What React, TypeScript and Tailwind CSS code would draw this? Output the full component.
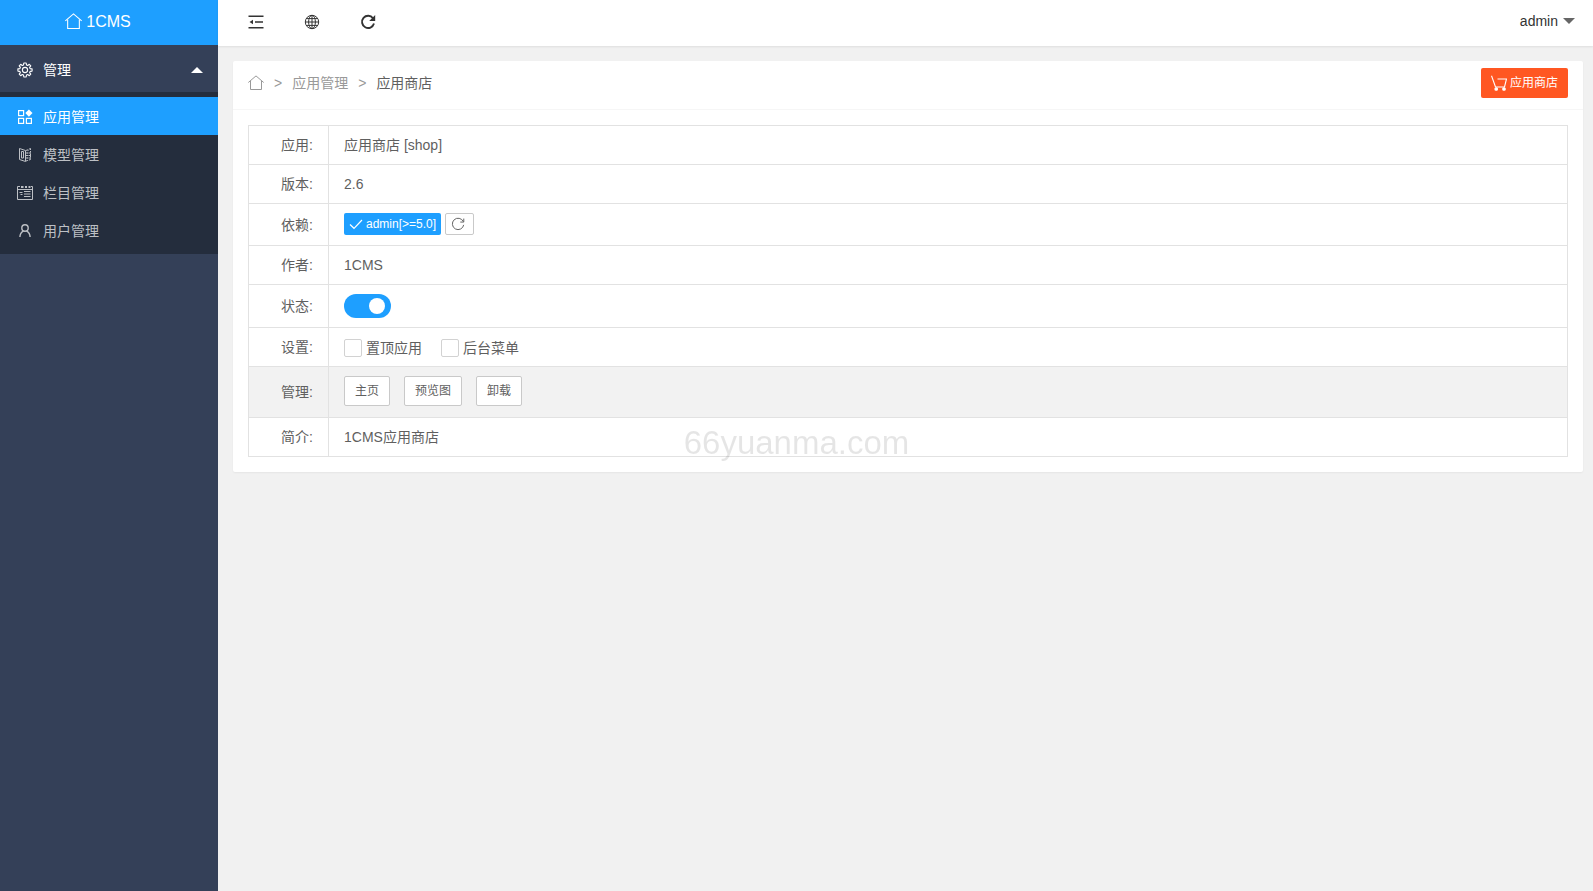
import { useState, type ReactNode } from "react";

type IconProps = { className?: string };

function HomeIcon({ className }: IconProps) {
  return (
    <svg viewBox="0 0 16 16" className={className} fill="none" stroke="currentColor" strokeWidth="1" aria-hidden="true">
      <path d="M0.300 7.500 8 .900l7.700 6.600" />
      <path d="M2.500 6v8.500h11V6" />
    </svg>
  );
}

function GearIcon({ className }: IconProps) {
  return (
    <svg viewBox="0 0 16 16" className={className} fill="none" stroke="currentColor" strokeWidth="1.1" strokeLinejoin="round" aria-hidden="true">
      <path d="M6.500 3 6.800 1h2.400l.3 2 1.200.5 1.600-1.200 1.500 1.500-1.200 1.600.5 1.200 2 .3v2.200l-2 .3-.5 1.200 1.200 1.600-1.500 1.500-1.600-1.200-1.200.5-.3 2H6.800l-.3-2-1.200-.5-1.600 1.200-1.500-1.500 1.200-1.600-.5-1.200-2-.3V6.900l2-.3.5-1.200-1.200-1.600 1.500-1.500 1.600 1.200z" />
      <circle cx="8" cy="8" r="2.600" />
    </svg>
  );
}

function AppsIcon({ className }: IconProps) {
  return (
    <svg viewBox="0 0 16 16" className={className} fill="none" stroke="currentColor" strokeWidth="1.2" aria-hidden="true">
      <rect x="1.600" y="1.600" width="5" height="5" />
      <rect x="1.600" y="9.400" width="5" height="5" />
      <rect x="9.400" y="9.400" width="5" height="5" />
      <path d="m11.900.5 3.600 3.600-3.600 3.600-3.600-3.600z" fill="currentColor" stroke="none" />
    </svg>
  );
}

function ModelIcon({ className }: IconProps) {
  return (
    <svg viewBox="0 0 16 16" className={className} fill="none" stroke="currentColor" strokeWidth="1" aria-hidden="true">
      <path d="M2.500 1.500 8.500 3.500v11L2.500 12.500z" />
      <path d="M4.500 4.500h2v6.500h-2z" />
      <path d="M9 3.500 13.500 1.500M9 6h5M9 8.500h5M9 11h5M9 14l4.500-1.500" strokeDasharray="2 1" />
      <path d="M13.500 1.500v11" strokeDasharray="1.500 1" />
      <path d="M11 3v10" strokeDasharray="1 1.500" />
    </svg>
  );
}

function ColumnIcon({ className }: IconProps) {
  return (
    <svg viewBox="0 0 16 16" className={className} fill="none" stroke="currentColor" strokeWidth="1" aria-hidden="true">
      <path d="M3 1.500H.500v13h15v-13H14M.5 4.500h15" />
      <path d="M4 2h2.500M8 2h2M11.500 2h2" strokeWidth="2" />
      <path d="M2.500 7.500h3M7 6.500h6.500M3.500 9.500h2M7 9h6.500M7 11.500h6.500" />
    </svg>
  );
}

function UserIcon({ className }: IconProps) {
  return (
    <svg viewBox="0 0 16 16" className={className} fill="none" stroke="currentColor" strokeWidth="1.400" aria-hidden="true">
      <circle cx="8" cy="5" r="3.200" />
      <path d="M2.900 14c.1-3 1.500-4.800 3.600-6.100M13.100 14c-.1-3-1.500-4.800-3.600-6.100" />
    </svg>
  );
}

function ShrinkIcon({ className }: IconProps) {
  return (
    <svg viewBox="0 0 16 16" className={className} fill="none" stroke="currentColor" strokeWidth="1.500" aria-hidden="true">
      <path d="M.5 2.200h15M7 8h8M.5 13.800h15" />
      <path d="M1.500 8 5 5.800v4.400z" fill="currentColor" stroke="none" />
    </svg>
  );
}

function GlobeIcon({ className }: IconProps) {
  return (
    <svg viewBox="0 0 16 16" className={className} fill="none" stroke="currentColor" strokeWidth="1" aria-hidden="true">
      <circle cx="8" cy="8" r="6.700" />
      <ellipse cx="8" cy="8" rx="3.400" ry="6.700" />
      <path d="M8 1.300v13.400M1.300 8h13.400M2.400 4.600h11.200M2.400 11.400h11.200" />
    </svg>
  );
}

function RefreshIcon({ className }: IconProps) {
  return (
    <svg viewBox="0 0 16 16" className={className} fill="none" stroke="currentColor" strokeWidth="1.900" aria-hidden="true">
      <path d="M13 4.200A6.100 6.100 0 1 0 14 9.600" />
      <path d="M15.200 1v6h-6z" fill="currentColor" stroke="none" />
    </svg>
  );
}

function ReloadThinIcon({ className }: IconProps) {
  return (
    <svg viewBox="0 0 16 16" className={className} fill="none" stroke="currentColor" strokeWidth="1.100" aria-hidden="true">
      <path d="M14 5.200A6.500 6.500 0 1 0 14.500 9" />
      <path d="M14.600 1.800v4h-4" />
    </svg>
  );
}

function CartIcon({ className }: IconProps) {
  return (
    <svg viewBox="0 0 16 16" className={className} fill="none" stroke="currentColor" strokeWidth="1.100" aria-hidden="true">
      <path d="M.5.800 4.500 12h9l2-8H6.500" />
      <circle cx="5.200" cy="14" r="1.300" fill="currentColor" />
      <circle cx="13" cy="14" r="1.300" fill="currentColor" />
    </svg>
  );
}

function CheckIcon({ className }: IconProps) {
  return (
    <svg viewBox="0 0 14 14" className={className} fill="none" stroke="currentColor" strokeWidth="1.200" aria-hidden="true">
      <path d="m1 7.500 4 3.800 8-8.300" />
    </svg>
  );
}

const menu = [
  { label: "应用管理", Icon: AppsIcon },
  { label: "模型管理", Icon: ModelIcon },
  { label: "栏目管理", Icon: ColumnIcon },
  { label: "用户管理", Icon: UserIcon },
];

function Sidebar() {
  const [open, setOpen] = useState(true);
  const [active, setActive] = useState(0);
  return (
    <aside className="w-[218px] shrink-0 bg-[#344058]">
      <a href="#home" className="flex h-[45px] items-center justify-center gap-1 bg-[#1e9fff] pr-[22px] pb-[2px] text-base text-white">
        <HomeIcon className="size-[17px]" />
        <span>1CMS</span>
      </a>
      <nav>
        <button
          type="button"
          aria-expanded={open}
          onClick={() => setOpen(!open)}
          className="flex h-[47px] w-full items-center pt-[2px] pr-[15px] pl-[17px] text-white"
        >
          <GearIcon className="size-4" />
          <span className="ml-[10px]">管理</span>
          <svg viewBox="0 0 12 6" className="ml-auto h-[6px] w-[12px]" fill="currentColor" aria-hidden="true">
            <path d="M0 6 6 0l6 6z" />
          </svg>
        </button>
        {open && (
          <ul className="bg-[#242d3d] pt-[5px] pb-[5px]">
            {menu.map(({ label, Icon }, i) => (
              <li key={label}>
                <a
                  href={`#menu-${i}`}
                  onClick={() => setActive(i)}
                  className={
                    active === i
                      ? "flex h-[38px] items-center gap-[10px] bg-[#1e9fff] pt-[2px] pl-[17px] text-white"
                      : "flex h-[38px] items-center gap-[10px] pt-[2px] pl-[17px] text-[#bdc0c5]"
                  }
                >
                  <Icon className="size-4" />
                  <span>{label}</span>
                </a>
              </li>
            ))}
          </ul>
        )}
      </nav>
    </aside>
  );
}

function Header() {
  return (
    <header className="flex h-[46px] items-center justify-between bg-white pr-[18px] pb-[2px] pl-[30px] text-[#333] shadow-[0_1px_2px_0_rgba(0,0,0,0.08)]">
      <div className="flex items-center gap-10">
        <button type="button" aria-label="收起菜单">
          <ShrinkIcon className="size-4" />
        </button>
        <button type="button" aria-label="网站首页">
          <GlobeIcon className="size-4" />
        </button>
        <button type="button" aria-label="刷新">
          <RefreshIcon className="size-4" />
        </button>
      </div>
      <button type="button" className="flex items-center gap-[5px] pb-[2px]">
        <span>admin</span>
        <svg viewBox="0 0 12 6" className="h-[6px] w-[12px] text-[#666]" fill="currentColor" aria-hidden="true">
          <path d="M0 0h12L6 6z" />
        </svg>
      </button>
    </header>
  );
}

type RowProps = { label: string; height: string; highlight?: boolean; children: ReactNode };

function Row({ label, height, highlight, children }: RowProps) {
  return (
    <tr className={highlight ? "bg-[#f2f2f2]" : ""}>
      <th scope="row" className={`${height} w-[80px] border border-[#e2e2e2] p-0 pr-[15px] text-right align-middle font-normal`}>
        {label}:
      </th>
      <td className="border border-[#e2e2e2] p-0 px-[15px] align-middle">{children}</td>
    </tr>
  );
}

function Tick({ label }: { label: string }) {
  return (
    <label className="flex items-center gap-1">
      <input
        type="checkbox"
        className="size-[18px] appearance-none rounded-xs border border-[#d2d2d2] bg-white checked:border-[#1e9fff] checked:bg-[#1e9fff]"
      />
      <span>{label}</span>
    </label>
  );
}

const actions = ["主页", "预览图", "卸载"];

export default function App() {
  return (
    <div className="flex min-h-screen bg-[#f1f1f1] font-['Liberation_Sans','Noto_Sans_CJK_SC',sans-serif] text-sm text-[#5f5f5f]">
      <Sidebar />
      <div className="min-w-0 flex-1">
        <Header />
        <main className="pt-[15px] pr-[10px] pl-[15px]">
          <section className="rounded-xs bg-white shadow-[0_1px_2px_0_rgba(0,0,0,0.05)]">
            <div className="flex h-[49px] items-center justify-between border-b border-[#f6f6f6] px-[15px] pb-[5px]">
              <nav aria-label="面包屑" className="flex items-center gap-[10px] text-[#999]">
                <a href="#home" aria-label="首页">
                  <HomeIcon className="size-4" />
                </a>
                <span>&gt;</span>
                <a href="#apps">应用管理</a>
                <span>&gt;</span>
                <span className="text-[#5f5f5f]">应用商店</span>
              </nav>
              <a href="#shop" className="flex h-[30px] items-center gap-[3px] rounded-xs bg-[#ff5722] px-[10px] text-xs text-white">
                <CartIcon className="size-4" />
                应用商店
              </a>
            </div>
            <div className="p-[15px]">
              <table className="w-full border-collapse">
                <tbody>
                  <Row label="应用" height="h-[39px]">应用商店 [shop]</Row>
                  <Row label="版本" height="h-[39px]">2.6</Row>
                  <Row label="依赖" height="h-[42px]">
                    <div className="flex items-center gap-1 pb-[2px]">
                      <button type="button" className="flex h-[22px] items-center gap-[3px] rounded-xs bg-[#1e9fff] px-[5px] text-xs text-white">
                        <CheckIcon className="size-[14px]" />
                        admin[&gt;=5.0]
                      </button>
                      <button
                        type="button"
                        aria-label="重新检测"
                        className="flex h-[22px] w-[29px] items-center justify-center rounded-xs border border-[#c9c9c9] bg-white pt-px pr-[3px]"
                      >
                        <ReloadThinIcon className="size-[14px]" />
                      </button>
                    </div>
                  </Row>
                  <Row label="作者" height="h-[39px]">1CMS</Row>
                  <Row label="状态" height="h-[43px]">
                    <input
                      type="checkbox"
                      role="switch"
                      defaultChecked
                      aria-label="状态"
                      className="flex h-6 w-[47px] appearance-none items-center rounded-full bg-[#d2d2d2] px-[6px] before:size-4 before:rounded-full before:bg-white checked:justify-end checked:bg-[#1e9fff]"
                    />
                  </Row>
                  <Row label="设置" height="h-[39px]">
                    <div className="flex items-center gap-[19px] pt-[2px]">
                      <Tick label="置顶应用" />
                      <Tick label="后台菜单" />
                    </div>
                  </Row>
                  <Row label="管理" height="h-[51px]" highlight>
                    <div className="flex gap-[14px] pb-[2px]">
                      {actions.map((text) => (
                        <button key={text} type="button" className="h-[30px] rounded-xs border border-[#c9c9c9] bg-white px-[10px] text-xs">
                          {text}
                        </button>
                      ))}
                    </div>
                  </Row>
                  <Row label="简介" height="h-[39px]">1CMS应用商店</Row>
                </tbody>
              </table>
            </div>
          </section>
        </main>
      </div>
      <div className="pointer-events-none fixed inset-0 flex items-center justify-center pb-[6px] text-[33px] leading-none text-black/10">
        66yuanma.com
      </div>
    </div>
  );
}
